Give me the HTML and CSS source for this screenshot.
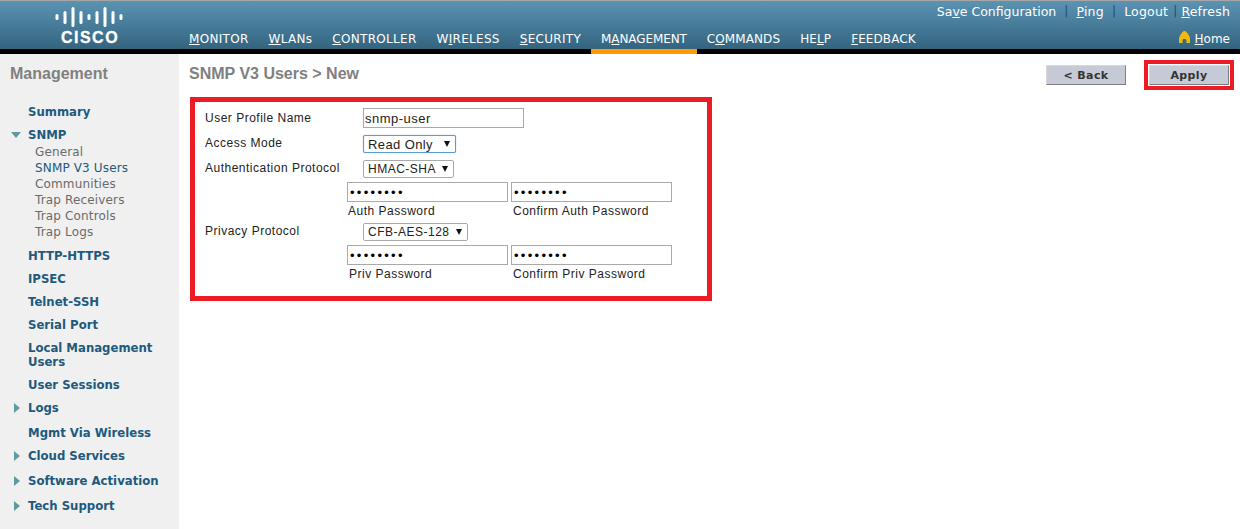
FILE: index.html
```html
<!DOCTYPE html>
<html lang="en">
<head>
    <meta charset="UTF-8">
    <title>SNMP V3 Users &gt; New</title>
    <link rel="stylesheet" href="styles.css">
</head>
<body>
    <header class="topbar">
        <div class="logo">
            <svg class="logo-bars" width="68" height="20" viewBox="0 0 68 20">
                <g fill="#fff">
                    <rect x="0.5" y="7" width="3" height="6" rx="1.5"/>
                    <rect x="8.5" y="4" width="3" height="13" rx="1.5"/>
                    <rect x="16.5" y="0" width="3" height="20" rx="1.5"/>
                    <rect x="24.5" y="4" width="3" height="13" rx="1.5"/>
                    <rect x="32.5" y="7" width="3" height="6" rx="1.5"/>
                    <rect x="40.5" y="4" width="3" height="13" rx="1.5"/>
                    <rect x="48.5" y="0" width="3" height="20" rx="1.5"/>
                    <rect x="56.5" y="4" width="3" height="13" rx="1.5"/>
                    <rect x="64.5" y="7" width="3" height="6" rx="1.5"/>
                </g>
            </svg>
            <div class="logo-word">CISCO</div>
        </div>
        <div class="topbar-main">
            <div class="util-links">
                <a class="save">Sa<u>v</u>e Configuration</a>
                <i class="sep">|</i>
                <a><u>P</u>ing</a>
                <i class="sep">|</i>
                <a>Lo<u>g</u>out</a>
                <i class="sep sep-tight">|</i>
                <a><u>R</u>efresh</a>
            </div>
            <nav class="nav">
                <a class="nav-item"><u>M</u>ONITOR</a>
                <a class="nav-item"><u>W</u>LANs</a>
                <a class="nav-item"><u>C</u>ONTROLLER</a>
                <a class="nav-item">W<u>I</u>RELESS</a>
                <a class="nav-item"><u>S</u>ECURITY</a>
                <a class="nav-item active">M<u>A</u>NAGEMENT</a>
                <a class="nav-item">C<u>O</u>MMANDS</a>
                <a class="nav-item">HE<u>L</u>P</a>
                <a class="nav-item"><u>F</u>EEDBACK</a>
                <a class="home">
                    <svg class="home-icon" width="11" height="12" viewBox="0 0 11 12">
                        <path d="M5.5 0 C7 0 8 1.5 9 3 C10 4.5 11 6 11 7.5 L11 12 L7.5 12 L7.5 9 C7.5 7.5 3.5 7.5 3.5 9 L3.5 12 L0 12 L0 7.5 C0 6 1 4.5 2 3 C3 1.5 4 0 5.5 0 Z" fill="#f2b90f"/>
                    </svg>
                    <span><u>H</u>ome</span>
                </a>
            </nav>
        </div>
    </header>

    <div class="page">
        <aside class="sidebar">
            <h2 class="side-title">Management</h2>
            <ul class="menu">
                <li class="menu-item m-summary">Summary</li>
                <li class="menu-item m-snmp"><b class="arrow-down"></b>SNMP</li>
                <li class="sub">General</li>
                <li class="sub current">SNMP V3 Users</li>
                <li class="sub">Communities</li>
                <li class="sub">Trap Receivers</li>
                <li class="sub">Trap Controls</li>
                <li class="sub">Trap Logs</li>
                <li class="menu-item m-http">HTTP-HTTPS</li>
                <li class="menu-item">IPSEC</li>
                <li class="menu-item">Telnet-SSH</li>
                <li class="menu-item">Serial Port</li>
                <li class="menu-item m-local">Local Management Users</li>
                <li class="menu-item">User Sessions</li>
                <li class="menu-item"><b class="arrow-right"></b>Logs</li>
                <li class="menu-item m-gap">Mgmt Via Wireless</li>
                <li class="menu-item"><b class="arrow-right"></b>Cloud Services</li>
                <li class="menu-item m-gap"><b class="arrow-right"></b>Software Activation</li>
                <li class="menu-item m-gap"><b class="arrow-right"></b>Tech Support</li>
            </ul>
        </aside>

        <main class="content">
            <div class="title-row">
                <h1 class="page-title">SNMP V3 Users &gt; New</h1>
                <div class="actions">
                    <button class="btn">&lt; Back</button>
                    <div class="apply-mark"><button class="btn btn-apply">Apply</button></div>
                </div>
            </div>

            <form class="user-form">
                <div class="row r-name">
                    <label>User Profile Name</label>
                    <input class="field" type="text" value="snmp-user">
                </div>
                <div class="row r-mode">
                    <label>Access Mode</label>
                    <div class="select focus">Read Only <b class="caret"></b></div>
                </div>
                <div class="row r-auth">
                    <label>Authentication Protocol</label>
                    <div class="select">HMAC-SHA <b class="caret"></b></div>
                </div>
                <div class="pw-row">
                    <div class="pw-col">
                        <input class="field" type="password" value="password">
                        <span>Auth Password</span>
                    </div>
                    <div class="pw-col">
                        <input class="field" type="password" value="password">
                        <span class="pw-confirm">Confirm Auth Password</span>
                    </div>
                </div>
                <div class="row r-priv">
                    <label>Privacy Protocol</label>
                    <div class="select">CFB-AES-128 <b class="caret"></b></div>
                </div>
                <div class="pw-row">
                    <div class="pw-col">
                        <input class="field" type="password" value="password">
                        <span class="pw-priv">Priv Password</span>
                    </div>
                    <div class="pw-col">
                        <input class="field" type="password" value="password">
                        <span class="pw-confirm">Confirm Priv Password</span>
                    </div>
                </div>
            </form>
        </main>
    </div>
</body>
</html>
```

FILE: styles.css
```css
html, body {
    margin: 0;
    padding: 0;
    background: #fff;
}
body {
    font-family: "DejaVu Sans", Verdana, sans-serif;
    width: 1240px;
    height: 529px;
    overflow: hidden;
}
/* ---------- top bar ---------- */
.topbar {
    display: flex;
    height: 48px;
    border-top: 1px solid #a6a6a6;
    border-bottom: 5px solid #000;
    background: linear-gradient(#5b93b3, #33647f);
    color: #fff;
}
.logo {
    width: 189px;
    flex: none;
    box-sizing: border-box;
    padding: 6px 0 0 55px;
}
.logo-bars {
    display: block;
}
.logo-word {
    width: 68px;
    text-align: center;
    text-indent: 2px;
    font: bold 16px "Liberation Sans", Arial, sans-serif;
    letter-spacing: 1.5px;
    line-height: 15px;
    margin-top: 3px;
    -webkit-text-stroke: 0.3px #fff;
}
.topbar-main {
    flex: 1;
    display: flex;
    flex-direction: column;
}
.util-links {
    display: flex;
    justify-content: flex-end;
    align-items: center;
    height: 20px;
    padding-right: 10px;
    font-size: 12.5px;
    letter-spacing: 0.2px;
}
.util-links .save {
    letter-spacing: 0;
}
.sep {
    font-style: normal;
    color: #254c66;
    margin: 0 8px;
    font-size: 12px;
}
.sep-tight {
    margin: 0 4px 0 5px;
}
.nav {
    display: flex;
    height: 28px;
    font-size: 12px;
    letter-spacing: 0.3px;
}
.nav-item {
    display: block;
    padding: 11px 10px 0;
    margin-left: -10px;
    margin-right: 10px;
    height: 17px;
    line-height: 14px;
    position: relative;
}
.nav-item.active {
    letter-spacing: -0.1px;
}
.nav-item.active ~ .nav-item {
    letter-spacing: 0.1px;
}
.nav-item.active::after {
    content: "";
    position: absolute;
    left: 0;
    right: 0;
    bottom: -5px;
    height: 5px;
    background: #ff9900;
}
.home {
    margin-left: auto;
    padding: 11px 10px 0 0;
    line-height: 14px;
    letter-spacing: 0;
    display: flex;
    align-items: flex-start;
    gap: 5px;
}
.home-icon {
    margin-top: -1px;
}
/* ---------- sidebar ---------- */
.page {
    display: flex;
    height: 475px;
}
.sidebar {
    width: 179px;
    flex: none;
    background: #f0f0f0;
    box-sizing: border-box;
}
.side-title {
    margin: 0;
    padding: 11px 0 0 10px;
    font: bold 16px "Liberation Sans", Arial, sans-serif;
    color: #808080;
    line-height: 18px;
}
.menu {
    list-style: none;
    margin: 23px 0 0;
    padding: 0 0 0 28px;
    color: #1d5a7d;
}
.menu-item {
    position: relative;
    font-size: 11.7px;
    font-weight: bold;
    line-height: 13px;
    margin-bottom: 10px;
    width: 135px;
}
.m-gap {
    margin-top: 12px;
}
.m-snmp {
    margin-bottom: 2px;
}
.m-http {
    margin-top: 10px;
}
.m-local {
    line-height: 14px;
    margin-top: -1px;
}
.sub {
    font-size: 12px;
    letter-spacing: 0.15px;
    line-height: 16px;
    padding-left: 7px;
    color: #6b6b6b;
}
.sub.current {
    color: #1d5a7d;
}
.arrow-down {
    position: absolute;
    left: -17px;
    top: 3px;
    border-left: 5px solid transparent;
    border-right: 5px solid transparent;
    border-top: 6px solid #5f9a9f;
}
.arrow-right {
    position: absolute;
    left: -14px;
    top: 1px;
    border-top: 5px solid transparent;
    border-bottom: 5px solid transparent;
    border-left: 6px solid #5f9a9f;
}
/* ---------- content ---------- */
.content {
    flex: 1;
    padding: 0 6px 0 10px;
}
.title-row {
    display: flex;
    justify-content: space-between;
    height: 43px;
}
.page-title {
    margin: 0;
    padding-top: 11px;
    font: bold 16px "Liberation Sans", Arial, sans-serif;
    line-height: 18px;
    color: #808080;
}
.actions {
    display: flex;
    align-items: flex-start;
    gap: 18px;
    padding-top: 6px;
}
.btn {
    width: 80px;
    height: 20px;
    padding: 0;
    margin-top: 5px;
    background: #c6c9d6;
    border: 1px solid;
    border-color: #d8d8d8 #7f7f7f #7f7f7f #d8d8d8;
    font: bold 11px "DejaVu Sans", Verdana, sans-serif;
    letter-spacing: 0.4px;
    color: #333;
}
.apply-mark {
    border: 4px solid #ed1c24;
    padding: 1px;
    display: flex;
}
.btn-apply {
    margin: 0;
}
.user-form {
    width: 522px;
    height: 204px;
    box-sizing: border-box;
    border: 5px solid #ed1c24;
    margin-left: 1px;
    padding: 6px 0 0 10px;
    font: 12px "Liberation Sans", Arial, sans-serif;
    letter-spacing: 0.5px;
    color: #222;
}
.row {
    display: flex;
    align-items: flex-start;
}
.row label {
    width: 158px;
    flex: none;
    line-height: 17px;
}
.r-name label {
    padding-top: 2px;
}
.field {
    box-sizing: border-box;
    width: 161px;
    height: 20px;
    padding: 0 1px;
    border: 1px solid #a9a9a9;
    font: 13px "Liberation Sans", Arial, sans-serif;
    letter-spacing: 0.5px;
    color: #222;
    outline: none;
    background: #fff;
}
.field[type="password"] {
    padding: 0 2px;
    letter-spacing: 2.3px;
    color: #000;
}
.select {
    box-sizing: border-box;
    display: flex;
    justify-content: space-between;
    align-items: center;
    height: 18px;
    border: 1px solid #a9a9a9;
    border-radius: 2px;
    padding: 0 5px 0 4px;
    font-size: 12px;
    letter-spacing: 0.5px;
    white-space: nowrap;
    background: #fff;
}
.select.focus {
    border: 1px solid #5b9bd8;
    box-shadow: 0 0 1px #5b9bd8;
    font-size: 13px;
    letter-spacing: 0.4px;
}
.caret {
    border-left: 3px solid transparent;
    border-right: 3px solid transparent;
    border-top: 6px solid #111;
}
.r-name {
    margin-bottom: 7px;
}
.r-mode {
    margin-bottom: 7px;
}
.r-mode .select { width: 93px; }
.r-auth .select { width: 91px; }
.r-priv .select { width: 105px; }
.r-auth {
    margin-bottom: 4px;
}
.pw-row {
    display: flex;
    gap: 3px;
    margin-left: 142px;
}
.pw-col {
    display: flex;
    flex-direction: column;
}
.pw-col span {
    line-height: 14px;
    margin-top: 2px;
    padding-left: 1px;
}
.pw-col .pw-priv,
.pw-col .pw-confirm {
    padding-left: 2px;
}
.r-priv {
    margin: 5px 0 4px;
}
```
